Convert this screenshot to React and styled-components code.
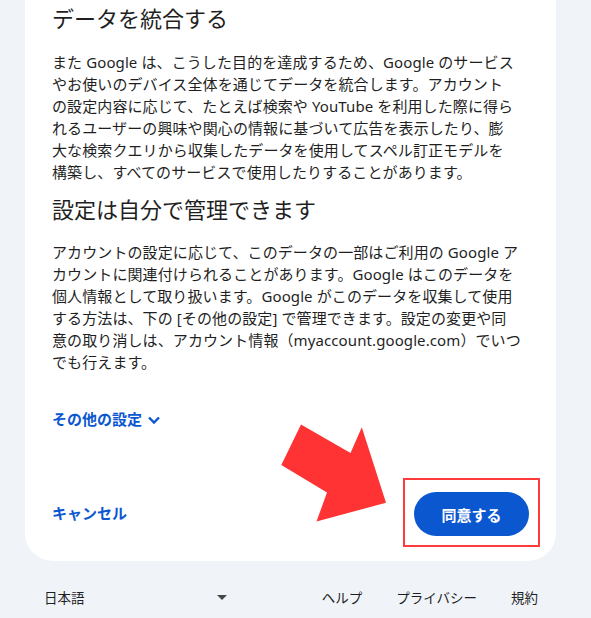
import styled, { createGlobalStyle } from 'styled-components'

const GlobalStyle = createGlobalStyle`
  html, body {
    margin: 0;
    padding: 0;
    background: #f0f4f9;
  }
  body {
    font-family: Roboto, "Noto Sans CJK JP", sans-serif;
    color: #1f1f1f;
  }
`

function App() {
  return (
    <>
      <GlobalStyle />
      <Page>
        <Card>
          <Heading>データを統合する</Heading>
          <Paragraph>
            また Google は、こうした目的を達成するため、Google のサービス<br />
            やお使いのデバイス全体を通じてデータを統合します。アカウント<br />
            の設定内容に応じて、たとえば検索や YouTube を利用した際に得ら<br />
            れるユーザーの興味や関心の情報に基づいて広告を表示したり、膨<br />
            大な検索クエリから収集したデータを使用してスペル訂正モデルを<br />
            構築し、すべてのサービスで使用したりすることがあります。
          </Paragraph>
          <Heading $top={14}>設定は自分で管理できます</Heading>
          <Paragraph $top={16}>
            アカウントの設定に応じて、このデータの一部はご利用の Google ア<br />
            カウントに関連付けられることがあります。Google はこのデータを<br />
            個人情報として取り扱います。Google がこのデータを収集して使用<br />
            する方法は、下の [その他の設定] で管理できます。設定の変更や同<br />
            意の取り消しは、アカウント情報（myaccount.google.com）でいつ<br />
            でも行えます。
          </Paragraph>
          <MoreLink>
            その他の設定
            <svg width="18" height="18" viewBox="0 0 18 18">
              <path d="M4 6.5l5 5 5-5" fill="none" stroke="#0b57d0" strokeWidth="2.4" />
            </svg>
          </MoreLink>
          <Actions>
            <TextButton>キャンセル</TextButton>
            <Highlight>
              <PrimaryButton>同意する</PrimaryButton>
            </Highlight>
          </Actions>
          <Arrow width="110" height="105" viewBox="0 0 110 105">
            <polygon
              points="21,4.6 1.3,45 47,72.5 36.5,101.6 106,82.7 81.8,7.2 70.5,32.9"
              fill="#ff3333"
            />
          </Arrow>
        </Card>
        <Footer>
          <LangSelect>
            日本語
            <svg width="10" height="6" viewBox="0 0 10 6">
              <path d="M0 0h10L5 5z" fill="#444746" />
            </svg>
          </LangSelect>
          <FooterLinks>
            <FooterLink>ヘルプ</FooterLink>
            <FooterLink>プライバシー</FooterLink>
            <FooterLink>規約</FooterLink>
          </FooterLinks>
        </Footer>
      </Page>
    </>
  )
}

const Page = styled.div`
  width: 531px;
  margin-left: 25px;
`

const Card = styled.div`
  position: relative;
  background: #ffffff;
  border-radius: 0 0 28px 28px;
  padding: 6px 20px 25px 27px;
`

const Heading = styled.h2`
  margin: ${(p) => p.$top || 0}px 0 0 0;
  font-size: 22px;
  line-height: 28px;
  font-weight: 400;
  color: #1f1f1f;
`

const Paragraph = styled.p`
  margin: ${(p) => p.$top || 17}px 0 0 0;
  font-family: "Noto Sans", "Noto Sans CJK JP", sans-serif;
  font-size: 15px;
  line-height: 22px;
  letter-spacing: 0.1px;
  color: #1f1f1f;
  white-space: nowrap;
`

const MoreLink = styled.div`
  margin-top: 37px;
  display: flex;
  align-items: center;
  gap: 3px;
  font-size: 15px;
  line-height: 20px;
  font-weight: 700;
  color: #0b57d0;
`

const Actions = styled.div`
  margin-top: 62px;
  margin-right: 7px;
  display: flex;
  justify-content: space-between;
  align-items: center;
`

const TextButton = styled.div`
  font-size: 15px;
  font-weight: 700;
  color: #0b57d0;
  line-height: 20px;
`

const Highlight = styled.div`
  position: relative;
  &::after {
    content: '';
    position: absolute;
    top: -14px;
    left: -11px;
    right: -11px;
    bottom: -11px;
    border: 2px solid #ff3b3b;
  }
`

const PrimaryButton = styled.div`
  width: 115px;
  height: 44px;
  border-radius: 22px;
  background: #0b57d0;
  color: #ffffff;
  font-size: 15px;
  font-weight: 700;
  display: flex;
  align-items: center;
  justify-content: center;
`

const Arrow = styled.svg`
  position: absolute;
  left: 255px;
  top: 420px;
`

const Footer = styled.div`
  display: flex;
  justify-content: space-between;
  align-items: center;
  padding: 28px 18px 0 19px;
  font-size: 13.5px;
  line-height: 18px;
  color: #1f1f1f;
`

const LangSelect = styled.div`
  width: 183px;
  display: flex;
  justify-content: space-between;
  align-items: center;
`

const FooterLinks = styled.div`
  display: flex;
  gap: 34px;
`

const FooterLink = styled.span`
  color: #1f1f1f;
`

export default App
